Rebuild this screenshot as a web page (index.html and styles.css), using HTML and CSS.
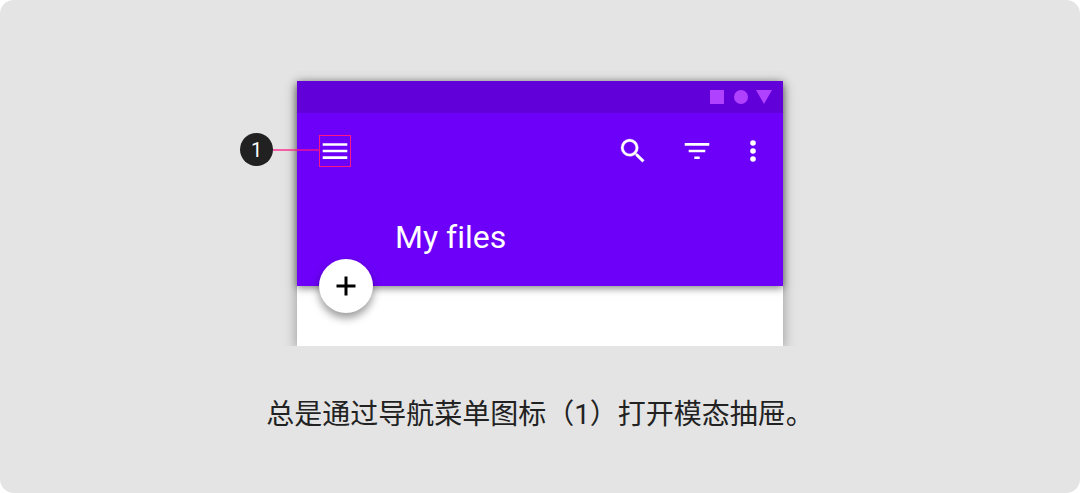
FILE: index.html
```
<!DOCTYPE html>
<html lang="zh-CN">
<head>
    <meta charset="UTF-8">
    <meta name="viewport" content="width=device-width, initial-scale=1">
    <title>导航菜单图标</title>
    <link rel="stylesheet" href="styles.css">
</head>
<body>
    <figure class="example">
        <div class="stage">
            <div class="screen">
                <header class="top">
                    <div class="status-bar">
                        <svg width="64" height="16" viewBox="0 0 64 16" fill="#b041ff" aria-hidden="true">
                            <path d="M1 1h14v14H1z"/>
                            <circle cx="32" cy="8" r="7"/>
                            <path d="M47 1h16l-8 14z"/>
                        </svg>
                    </div>
                    <div class="toolbar">
                        <button class="icon-btn menu" aria-label="Menu">
                            <svg width="30" height="30" viewBox="0 0 30 30" fill="#fff">
                                <path d="M2.700 7.200h24.600v2.600H2.700zM2.700 13.700h24.600v2.600H2.700zM2.700 20.300h24.600v2.600H2.700z"/>
                            </svg>
                        </button>
                        <div class="actions">
                            <button class="icon-btn" aria-label="Search">
                                <svg width="32" height="32" viewBox="0 0 24 24" fill="#fff" stroke="#fff" stroke-width=".2">
                                    <path d="M15.5 14h-.79l-.28-.27A6.471 6.471 0 0 0 16 9.5 6.5 6.5 0 1 0 9.5 16c1.61 0 3.09-.59 4.23-1.57l.27.28v.79l5 4.99L20.49 19l-4.99-5zm-6 0C7.01 14 5 11.99 5 9.5S7.01 5 9.5 5 14 7.01 14 9.5 11.99 14 9.5 14z"/>
                                </svg>
                            </button>
                            <button class="icon-btn" aria-label="Filter">
                                <svg width="32" height="32" viewBox="0 0 32 32" fill="#fff">
                                    <path d="M3.700 8.100h24.600v2.600H3.700zM7.700 14.700h16.600v2.600H7.700zM13.300 21.400h5.400V24h-5.400z"/>
                                </svg>
                            </button>
                            <button class="icon-btn more" aria-label="More">
                                <svg width="16" height="32" viewBox="0 0 16 32" fill="#fff">
                                    <circle cx="8" cy="8" r="2.8"/>
                                    <circle cx="8" cy="16" r="2.8"/>
                                    <circle cx="8" cy="24" r="2.8"/>
                                </svg>
                            </button>
                        </div>
                    </div>
                    <h1 class="title">My files</h1>
                    <button class="fab" aria-label="Add">
                        <svg width="20" height="20" viewBox="0 0 20 20" fill="#000">
                            <path d="M8.500 .5h3v8h8v3h-8v8h-3v-8h-8v-3h8z"/>
                        </svg>
                    </button>
                </header>
            </div>
            <div class="callout">
                <span class="callout-number">1</span>
                <span class="callout-line"></span>
            </div>
        </div>
        <figcaption>总是通过导航菜单图标（1）打开模态抽屉。</figcaption>
    </figure>
</body>
</html>
```
FILE: styles.css
```
* {
    box-sizing: border-box;
}
body {
    margin: 0;
    background: #fff;
    font-family: Roboto, "Noto Sans CJK SC", sans-serif;
}
.example {
    display: flex;
    flex-direction: column;
    align-items: center;
    min-height: 100vh;
    margin: 0;
    padding: 81px 0 40px;
    background: #e4e4e4;
    border-radius: 14px;
}
.stage {
    position: relative;
    width: 45%;
    min-width: 360px;
}
/* the shadow is cut off along the bottom edge of the screen */
.screen {
    padding-bottom: 60px;
    background: #fff;
    box-shadow: 0 4px 12px rgba(0,0,0,0.35);
    clip-path: inset(-20px -20px 0 -20px);
}
.top {
    position: relative;
    background: #6c00f8;
    box-shadow: 0 2px 8px rgba(0,0,0,0.5);
    padding-bottom: 29px;
}
.status-bar {
    display: flex;
    align-items: center;
    justify-content: flex-end;
    height: 32px;
    padding-right: 10px;
    background: #6200d9;
}
.toolbar {
    display: flex;
    align-items: center;
    justify-content: space-between;
    padding: 22px 22px 0;
}
.icon-btn {
    display: flex;
    align-items: center;
    justify-content: center;
    width: 32px;
    height: 32px;
    padding: 0;
    border: 0;
    background: none;
}
.icon-btn.menu {
    border: 1px solid #ff1684;
}
.icon-btn.more {
    width: 16px;
}
.actions {
    display: flex;
    gap: 32px;
}
.title {
    margin: 50px 0 0 98px;
    color: #fff;
    font-size: 32px;
    font-variant-ligatures: none;
    font-weight: 400;
    line-height: 40px;
}
.fab {
    position: absolute;
    left: 22px;
    bottom: -27px;
    display: flex;
    align-items: center;
    justify-content: center;
    width: 54px;
    height: 54px;
    padding: 0;
    border: 0;
    border-radius: 50%;
    background: #fff;
    box-shadow: 0 5px 9px rgba(0,0,0,0.4);
}
.callout {
    position: absolute;
    top: 52px;
    left: -57px;
    display: flex;
    align-items: center;
}
.callout-number {
    width: 33px;
    height: 33px;
    border-radius: 50%;
    background: #212121;
    color: #fff;
    font-size: 20px;
    line-height: 34px;
    text-align: center;
}
.callout-line {
    width: 46px;
    height: 2px;
    background: rgba(255,22,132,0.65);
}
figcaption {
    margin-top: 49px;
    color: #222;
    font-size: 28px;
    line-height: 40px;
    text-align: center;
}
```
